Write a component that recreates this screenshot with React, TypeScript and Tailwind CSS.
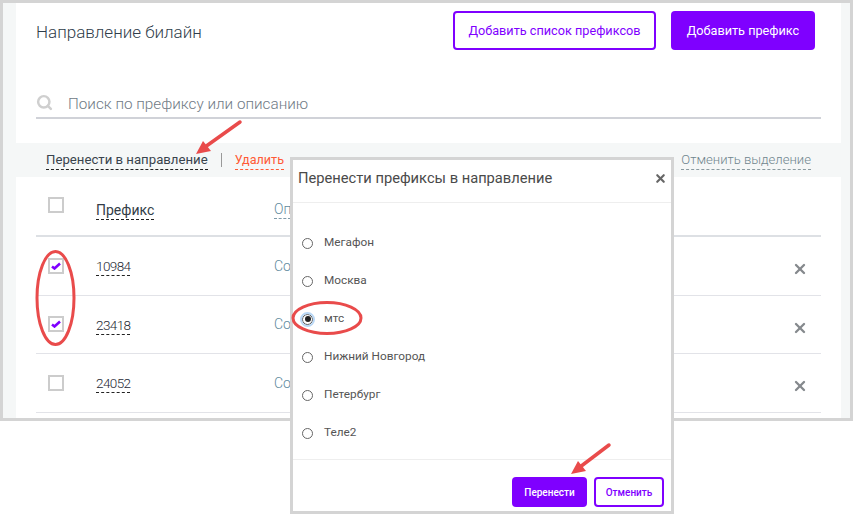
import { X, Search } from 'lucide-react';

const rows = [
    { code: '10984', checked: true },
    { code: '23418', checked: true },
    { code: '24052', checked: false },
];

const options = ['Мегафон', 'Москва', 'мтс', 'Нижний Новгород', 'Петербург', 'Теле2'];

function Box({ checked }: { checked?: boolean }) {
    return (
        <span className="w-4 h-4 border-2 border-[#cccccc] bg-white flex items-center justify-center">
            {checked && (
                <svg width="10" height="8" viewBox="0 0 10 8" fill="none">
                    <path d="M1 4.5 L3.5 6.5 L9 1.5" stroke="#7f00ff" strokeWidth="2.6" />
                </svg>
            )}
        </span>
    );
}

function Row({ code, checked }: { code: string; checked: boolean }) {
    return (
        <div className="h-[58.5px] border-b border-[#e2e3e8] flex items-center relative">
            <div className="w-[60px] pl-3"><Box checked={checked} /></div>
            <span className="w-[178px] text-[13.5px] tracking-[-0.6px] font-light">
                <span className="inline-block leading-[18px] text-[#1f2a35] border-b border-dashed border-[#222222] mt-[2px]">{code}</span>
            </span>
            <span className="text-sm font-light text-[#5f8a9e]">Со</span>
            <X size={16} strokeWidth={3.5} className="absolute right-[13px] top-[24px] text-[#85898d]" />
        </div>
    );
}

function Modal() {
    return (
        <div className="absolute left-[290px] top-[157px] w-[384px] h-[357px] bg-white border-[3px] border-[#d4d4d4] flex flex-col">
            <div className="h-[43px] border-b border-[#eeeeee] flex items-center justify-between pl-[5px] pr-[4px] pb-[5px] shrink-0">
                <span className="text-[14.7px] text-[#4a4a4a]">Перенести префиксы в направление</span>
                <X size={13} strokeWidth={4} className="text-[#666666]" />
            </div>
            <div className="flex-1 pt-[21px] pl-[9px] border-b border-[#eeeeee]">
                {options.map(o => (
                    <div key={o} className="h-[38px] flex items-center gap-[11px] text-[11.8px] text-[#555555]">
                        {o === 'мтс' ? (
                            <span className="w-[11px] h-[11px] rounded-full border border-[#555555] bg-white flex items-center justify-center outline-2 outline-[#b9d7f5]">
                                <span className="w-[6px] h-[6px] rounded-full bg-[#222222]" />
                            </span>
                        ) : (
                            <span className="w-[11px] h-[11px] rounded-full border border-[#666666] bg-white" />
                        )}
                        <span>{o}</span>
                    </div>
                ))}
            </div>
            <div className="h-[51px] shrink-0 flex justify-end gap-[7px] pt-[17px] pr-[7px]">
                <button className="w-[75px] h-[30px] rounded bg-[#7f00ff] text-white text-[10px] font-medium">Перенести</button>
                <button className="w-[70px] h-[30px] rounded border-2 border-[#7f00ff] bg-white text-[#7f00ff] text-[10px] font-medium">Отменить</button>
            </div>
        </div>
    );
}

function Annotations() {
    return (
        <svg className="absolute inset-0 pointer-events-none" width="853" height="515" fill="none">
            <ellipse cx="55.5" cy="298" rx="18.5" ry="46.5" stroke="#e94b4b" strokeWidth="3" />
            <ellipse cx="327" cy="318" rx="34" ry="15.5" stroke="#e94b4b" strokeWidth="3" />
            <path d="M240 122 L205 147" stroke="#e94b4b" strokeWidth="3.5" strokeLinecap="round" />
            <path d="M196 154 L203 141 L211 151 Z" fill="#e94b4b" />
            <path d="M609 445 L580 467" stroke="#e94b4b" strokeWidth="3.5" strokeLinecap="round" />
            <path d="M571 474 L578 461 L586 471 Z" fill="#e94b4b" />
        </svg>
    );
}

export default function App() {
    return (
        <div className="relative w-[853px] h-[515px] bg-white overflow-hidden font-['Roboto',sans-serif]">
            <div className="h-[421px] border-[3px] border-[#d4d4d4] flex overflow-hidden">
                <div className="w-[13px] bg-[#f5f7f7] shrink-0" />
                <div className="flex-1 bg-white">
                    <div className="h-[94px] pt-[8px] pl-5 pr-[26px] flex justify-between items-start">
                        <h1 className="text-[17px] font-light text-[#2f3d4a] mt-[9px]">Направление билайн</h1>
                        <div className="flex gap-[15px]">
                            <button className="w-[203px] h-[39px] rounded border-2 border-[#7f00ff] text-[#7f00ff] text-[12.7px]">Добавить список префиксов</button>
                            <button className="w-[144px] h-[39px] rounded bg-[#7f00ff] text-white text-[12.7px]">Добавить префикс</button>
                        </div>
                    </div>
                    <div className="mx-5 h-[22px] border-b-2 border-[#d0d2d8] flex items-start gap-[15px]">
                        <Search size={17} strokeWidth={3.5} className="text-[#cfcfcf] -mt-[3px]" />
                        <span className="text-[15.25px] font-light text-[#6f7a85] -mt-[4px]">Поиск по префиксу или описанию</span>
                    </div>
                    <div className="mt-[24px] h-[34px] bg-[#f5f7f7] pl-[30px] pr-[30px] flex items-center text-[13.2px]">
                        <span className="text-[#39434d] leading-[18px] border-b border-dashed border-[#222222]">Перенести в направление</span>
                        <span className="w-px h-[14px] bg-[#999999] mx-[13px]" />
                        <span className="text-[12.6px] text-[#ff5a36] leading-[18px] border-b border-dashed border-[#ff5a36]">Удалить</span>
                        <span className="ml-auto text-[13.1px] font-light text-[#6f858e] leading-[18px] border-b border-dashed border-[#8a9aa0]">Отменить выделение</span>
                    </div>
                    <div className="mx-5 pt-px">
                        <div className="h-[59px] border-b-2 border-[#dde0e4] flex items-center">
                            <div className="w-[60px] pl-3 -mt-[4px]"><Box /></div>
                            <span className="w-[178px] text-sm mt-[6px]">
                                <span className="inline-block leading-[18px] text-[#333d47] border-b border-dashed border-[#222222]">Префикс</span>
                            </span>
                            <span className="text-sm font-light leading-[18px] mt-[6px] text-[#5f8a9e] border-b border-dashed border-[#7f9aa8]">Оп</span>
                        </div>
                        {rows.map(r => <Row key={r.code} code={r.code} checked={r.checked} />)}
                    </div>
                </div>
                <div className="w-[9px] bg-[#f5f7f7] shrink-0" />
            </div>
            <Modal />
            <Annotations />
        </div>
    );
}
